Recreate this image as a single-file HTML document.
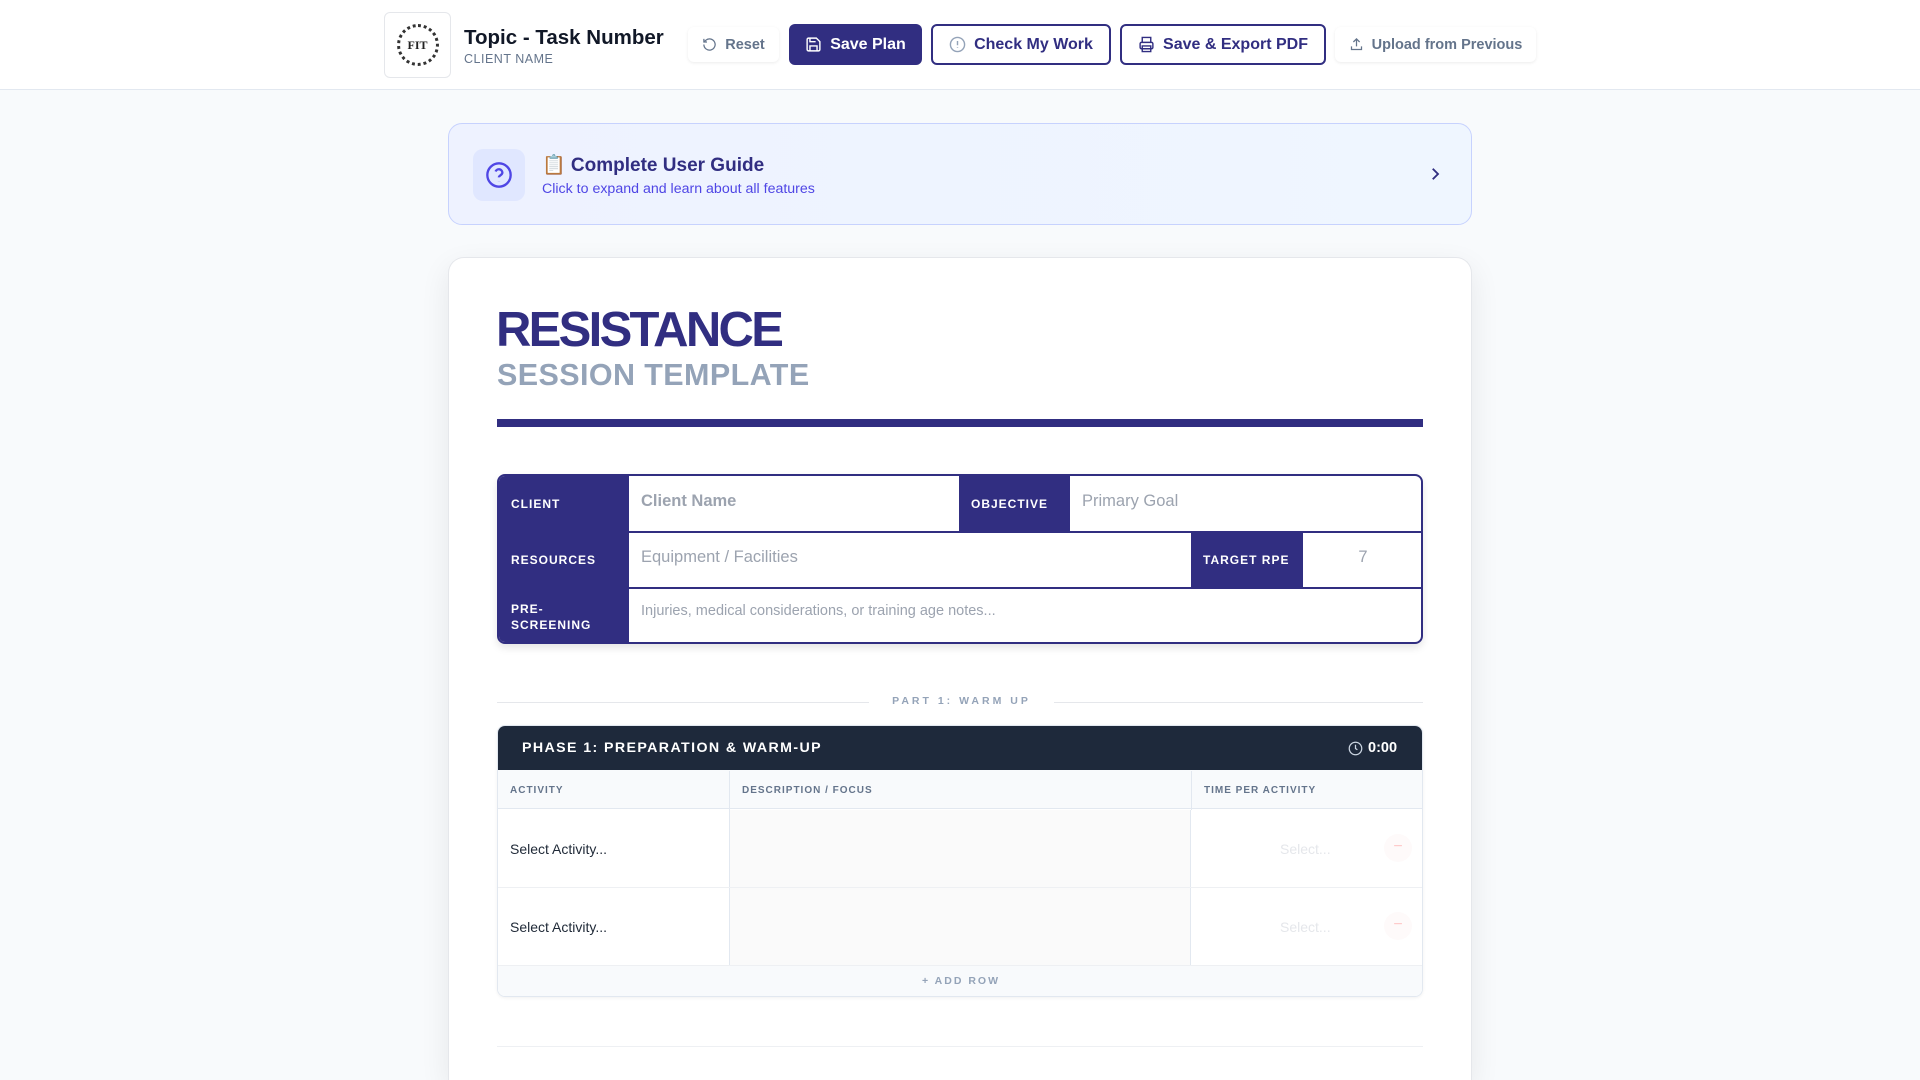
<!DOCTYPE html>
<html><head><meta charset="utf-8"><style>
*{box-sizing:border-box;margin:0;padding:0}
html,body{width:1920px;height:1080px;overflow:hidden}
body{background:#f8fafc;font-family:"Liberation Sans",sans-serif}
#wrap{position:relative;width:1920px;height:1080px;overflow:hidden}
.abs{position:absolute}
.hdr{left:0;top:0;width:1920px;height:90px;background:#fff;border-bottom:1px solid #e2e8f0}
.btn{position:absolute;top:24px;height:41px;border-radius:6px;display:flex;align-items:center;justify-content:center;gap:8px;font-weight:bold;font-size:16px}
.lbl{background:#312e81;color:#fff;font-size:12px;font-weight:bold;letter-spacing:1px;display:flex;align-items:center;padding-left:12px;position:absolute}
.ph{color:#9ca3af;position:absolute}
.th{position:absolute;top:45px;height:39px;font-size:10px;font-weight:bold;letter-spacing:1px;color:#64748b;display:flex;align-items:center;padding-left:12px}
</style></head><body><div id="wrap">
<div class="abs hdr">
 <div class="abs" style="left:384px;top:12px;width:67px;height:66px;border:1px solid #e5e7eb;border-radius:6px;background:#fff;display:flex;align-items:center;justify-content:center">
  <div style="width:42px;height:42px;border-radius:50%;border:3px dotted #333;display:flex;align-items:center;justify-content:center;font-family:'Liberation Serif',serif;font-weight:bold;font-size:12px;color:#222">FIT</div>
 </div>
 <div class="abs" style="left:464px;top:26px;font-size:20.5px;font-weight:bold;color:#111827">Topic - Task Number</div>
 <div class="abs" style="left:464px;top:52px;font-size:12.5px;color:#64748b;letter-spacing:.5px">CLIENT NAME</div>
 <div class="btn" style="left:688px;top:27px;width:91px;height:35px;color:#64748b;font-size:14.5px;box-shadow:0 1px 3px rgba(0,0,0,.08)"><svg width="15" height="15" viewBox="0 0 24 24" fill="none" stroke="#64748b" stroke-width="2"><path d="M3 12a9 9 0 1 0 3-6.7L3 8"/><path d="M3 3v5h5"/></svg>Reset</div>
 <div class="btn" style="left:789px;width:133px;background:#312e81;color:#fff"><svg width="17" height="17" viewBox="0 0 24 24" fill="none" stroke="#fff" stroke-width="2"><path d="M5 3h11l5 5v11a2 2 0 0 1-2 2H5a2 2 0 0 1-2-2V5a2 2 0 0 1 2-2z"/><path d="M7 3v5h8M7 21v-7h10v7"/></svg>Save Plan</div>
 <div class="btn" style="left:931px;width:180px;border:2px solid #312e81;color:#312e81;background:#fff"><svg width="17" height="17" viewBox="0 0 24 24" fill="none" stroke="#94a3b8" stroke-width="2"><circle cx="12" cy="12" r="10"/><path d="M12 7v6M12 16v1"/></svg>Check My Work</div>
 <div class="btn" style="left:1120px;width:206px;border:2px solid #312e81;color:#312e81;background:#fff"><svg width="17" height="17" viewBox="0 0 24 24" fill="none" stroke="#312e81" stroke-width="2"><path d="M6 9V2h12v7"/><rect x="3" y="9" width="18" height="9" rx="2"/><path d="M6 14h12v8H6z"/></svg>Save &amp; Export PDF</div>
 <div class="btn" style="left:1335px;top:27px;width:201px;height:35px;color:#64748b;font-size:14.5px;box-shadow:0 1px 3px rgba(0,0,0,.08)"><svg width="15" height="15" viewBox="0 0 24 24" fill="none" stroke="#64748b" stroke-width="2"><path d="M4 15v5h16v-5M12 3v12M7 8l5-5 5 5"/></svg>Upload from Previous</div>
</div>

<div class="abs" style="left:448px;top:123px;width:1024px;height:102px;border:1px solid #c7d2fe;border-radius:14px;background:linear-gradient(90deg,#eef2ff,#eff6ff)">
 <div class="abs" style="left:24px;top:25px;width:52px;height:52px;border-radius:10px;background:#e0e7ff;display:flex;align-items:center;justify-content:center"><svg width="28" height="28" viewBox="0 0 24 24" fill="none" stroke="#4f46e5" stroke-width="2"><circle cx="12" cy="12" r="10"/><path d="M9.1 9a3 3 0 0 1 5.8 1c0 2-3 2.5-3 4"/><path d="M12 17.2v.1"/></svg></div>
 <div class="abs" style="left:93px;top:29px;font-size:19px;font-weight:bold;color:#312e81">📋 Complete User Guide</div>
 <div class="abs" style="left:93px;top:57px;font-size:14.2px;color:#4f46e5">Click to expand and learn about all features</div>
 <svg class="abs" style="left:977px;top:41px" width="18" height="18" viewBox="0 0 24 24" fill="none" stroke="#312e81" stroke-width="2.5"><path d="M9 5l7 7-7 7"/></svg>
</div>

<div class="abs" style="left:448px;top:257px;width:1024px;height:823px;background:#fff;border:1px solid #e5e7eb;border-bottom:none;border-radius:16px 16px 0 0;box-shadow:0 10px 30px rgba(0,0,0,.08)">
 <div class="abs" style="left:47px;top:44px;font-size:49px;font-weight:bold;color:#312e81;letter-spacing:-2.7px">RESISTANCE</div>
 <div class="abs" style="left:48px;top:100px;font-size:30.5px;font-weight:bold;color:#94a3b8;letter-spacing:.4px">SESSION TEMPLATE</div>
 <div class="abs" style="left:48px;top:161px;width:926px;height:8px;background:#312e81"></div>

 <div class="abs" style="left:48px;top:216px;width:926px;height:170px;border:2px solid #312e81;border-radius:8px;overflow:hidden;box-shadow:0 4px 8px rgba(0,0,0,.1)">
  <div class="lbl" style="left:0;top:0;width:130px;height:56px">CLIENT</div>
  <div class="ph" style="left:142px;top:16px;font-size:16.5px;font-weight:bold">Client Name</div>
  <div class="lbl" style="left:460px;top:0;width:111px;height:56px">OBJECTIVE</div>
  <div class="ph" style="left:583px;top:16px;font-size:16.5px">Primary Goal</div>
  <div class="abs" style="left:0;top:55px;width:926px;height:2px;background:#312e81"></div>
  <div class="lbl" style="left:0;top:56px;width:130px;height:56px">RESOURCES</div>
  <div class="ph" style="left:142px;top:72px;font-size:16.5px">Equipment / Facilities</div>
  <div class="lbl" style="left:692px;top:56px;width:112px;height:56px">TARGET RPE</div>
  <div class="ph" style="left:804px;top:72px;width:120px;text-align:center;font-size:16.5px">7</div>
  <div class="abs" style="left:0;top:111px;width:926px;height:2px;background:#312e81"></div>
  <div class="lbl" style="left:0;top:112px;width:130px;height:58px;line-height:16px">PRE-<br>SCREENING</div>
  <div class="ph" style="left:142px;top:127px;font-size:14.5px">Injuries, medical considerations, or training age notes...</div>
 </div>

 <div class="abs" style="left:48px;top:444px;width:926px;height:1px;background:#e5e7eb"></div>
 <div class="abs" style="left:420px;top:437px;width:185px;background:#fff;text-align:center;font-size:10.5px;font-weight:bold;letter-spacing:3px;color:#94a3b8">PART 1: WARM UP</div>

 <div class="abs" style="left:48px;top:467px;width:926px;height:272px;border:1px solid #e2e8f0;border-radius:8px;overflow:hidden;box-shadow:0 1px 3px rgba(0,0,0,.06)">
  <div class="abs" style="left:0;top:0;width:926px;height:44px;background:#1e293b"></div>
  <div class="abs" style="left:24px;top:14px;color:#fff;font-size:14.2px;font-weight:bold;letter-spacing:1.4px">PHASE 1: PREPARATION &amp; WARM-UP</div>
  <svg class="abs" style="left:850px;top:15px" width="15" height="15" viewBox="0 0 24 24" fill="none" stroke="#cbd5e1" stroke-width="2"><circle cx="12" cy="12" r="10"/><path d="M12 6v6l3 2"/></svg>
  <div class="abs" style="left:870px;top:14px;color:#fff;font-size:14.5px;font-weight:bold">0:00</div>
  <div class="abs" style="left:0;top:44px;width:926px;height:39px;background:#f8fafc;border-bottom:1px solid #e2e8f0"></div>
  <div class="th" style="left:0;width:231px">ACTIVITY</div>
  <div class="th" style="left:231px;width:462px;border-left:1px solid #e2e8f0">DESCRIPTION / FOCUS</div>
  <div class="th" style="left:693px;width:233px;border-left:1px solid #e2e8f0">TIME PER ACTIVITY</div>
  <div class="abs" style="left:231px;top:84px;width:462px;height:155px;background:#fafafa;border-left:1px solid #e2e8f0;border-right:1px solid #e2e8f0"></div>
  <div class="abs" style="left:0;top:161px;width:926px;height:1px;background:#eef0f3"></div>
  <div class="abs" style="left:12px;top:115px;font-size:14px;color:#1f2937">Select Activity...</div>
  <div class="abs" style="left:12px;top:193px;font-size:14px;color:#1f2937">Select Activity...</div>
  <div class="abs" style="left:782px;top:115px;font-size:14px;color:#e5e7eb">Select...</div>
  <div class="abs" style="left:782px;top:193px;font-size:14px;color:#e5e7eb">Select...</div>
  <div class="abs" style="left:886px;top:108px;width:28px;height:28px;border-radius:50%;background:#fefafa;color:#fecaca;text-align:center;line-height:26px">−</div>
  <div class="abs" style="left:886px;top:186px;width:28px;height:28px;border-radius:50%;background:#fefafa;color:#fecaca;text-align:center;line-height:26px">−</div>
  <div class="abs" style="left:0;top:239px;width:926px;height:33px;background:#f8fafc;border-top:1px solid #eef0f3;text-align:center;line-height:31px;font-size:10.5px;font-weight:bold;letter-spacing:2px;color:#94a3b8">+ ADD ROW</div>
 </div>
 <div class="abs" style="left:48px;top:788px;width:926px;height:1px;background:#eef0f3"></div>
</div>
</div></body></html>
